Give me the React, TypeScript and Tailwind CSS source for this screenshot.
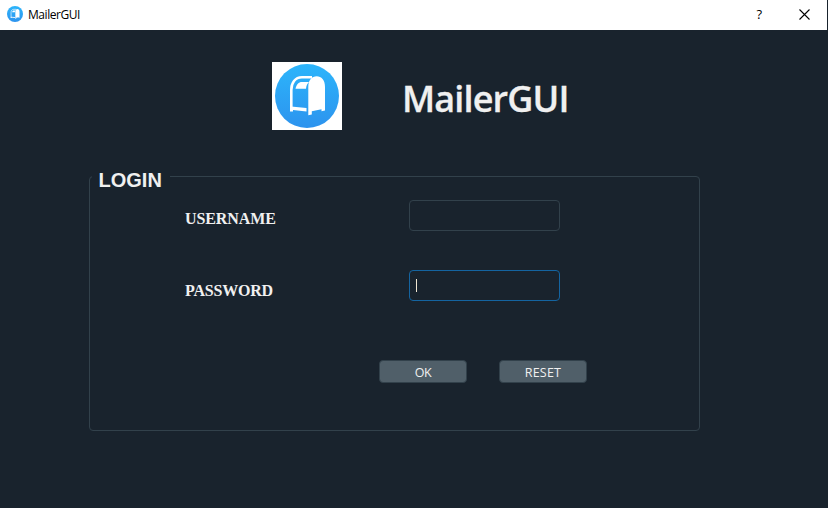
function MailboxIcon({ className }: { className: string }) {
  return (
    <svg viewBox="0 0 64 64" className={className} aria-hidden="true">
      <defs>
        <linearGradient id="sky" x1="0" y1="0" x2="0" y2="1">
          <stop offset="0" stopColor="#2cb5fb" />
          <stop offset="1" stopColor="#2d93ee" />
        </linearGradient>
      </defs>
      <circle cx="32" cy="32" r="32" fill="url(#sky)" />
      <path d="M37 13.3H27C20 13.3 16.3 19 16.3 26V47" fill="none" stroke="#fff" strokeWidth="2.6" />
      <path d="M16 42.5L31.5 44V47.5L18 46V47.5H15V42.5Z" fill="#fff" />
      <path d="M34 18C32 20 31.3 22 31 24.7H20.5C21.5 20.5 23.5 18 27 18Z" fill="#fff" />
      <path d="M33.3 51.3V23C33.3 16 37 12.3 41.7 12.3S50 16 50 23V46.5L46.5 47.3V45.2L36.8 47.3V50.5Z" fill="#fff" />
    </svg>
  );
}

export default function App() {
  return (
    <div className="flex h-[508px] w-[828px] flex-col overflow-hidden bg-[#19232d] font-['Open_Sans','Noto_Sans',sans-serif] text-[#f0f0f0]">
      <header className="flex h-[30px] shrink-0 items-center border-r border-[#19232d] bg-white pl-[7px] text-black">
        <MailboxIcon className="mb-[2px] size-[16px]" />
        <span className="ml-[5px] text-[12px] leading-[30px] tracking-[-0.45px]">MailerGUI</span>
        <span className="ml-auto mr-[37px] pb-[2px] text-[13px] font-medium leading-[28px]">?</span>
        <svg className="mb-[2px] mr-[17px] size-[11px]" viewBox="0 0 11 11" stroke="#000" strokeWidth="1.1">
          <path d="M0.5 0.5L10.5 10.5M10.5 0.5L0.5 10.5" />
        </svg>
      </header>
      <main className="flex grow flex-col">
        <div className="flex h-[100px] shrink-0 pl-[272px] pt-[32px]">
          <div className="flex h-[68px] w-[70px] items-center justify-center bg-white">
            <MailboxIcon className="size-[64px]" />
          </div>
          <h1 className="ml-[60px] mt-[12px] whitespace-nowrap text-[36px] font-semibold leading-[50px] tracking-[-0.85px] [-webkit-text-stroke:0.3px_#f0f0f0]">MailerGUI</h1>
        </div>
        <section className="ml-[89px] mt-[46px] flex h-[255px] w-[611px] flex-col rounded-[4px] border border-[#32414b]">
          <h2 className="-mt-[9px] ml-[2px] h-[24px] w-[78px] bg-[#19232d] pl-[6.5px] font-['Liberation_Sans',Arial,sans-serif] text-[20px] font-bold leading-[24px]">
            LOGIN
          </h2>
          <div className="mt-[8px] flex pl-[95px]">
            <label htmlFor="username" className="w-[224px] pt-[9px] font-['Liberation_Serif',serif] text-[16px] font-bold leading-[20px] tracking-[-0.1px]">USERNAME</label>
            <input id="username" className="h-[31px] w-[151px] rounded-[4px] border border-[#32414b] bg-transparent px-[6px] outline-none" />
          </div>
          <div className="mt-[39px] flex pl-[95px]">
            <label className="w-[224px] pt-[11px] font-['Liberation_Serif',serif] text-[16px] font-bold leading-[20px] tracking-[-0.2px]">PASSWORD</label>
            <div className="flex h-[31px] w-[151px] items-center rounded-[4px] border border-[#1464a0] pl-[6px]">
              <span className="h-[13px] w-px bg-[#f0e6d2]" />
            </div>
          </div>
          <div className="mt-[59px] flex gap-[32px] pl-[289px] text-[12.5px] leading-[19px]">
            <button className="h-[23px] w-[88px] rounded-[4px] border border-[#32414b] bg-[#505f69] pt-[2px] tracking-[-0.4px]">OK</button>
            <button className="h-[23px] w-[88px] rounded-[4px] border border-[#32414b] bg-[#505f69] pt-[2px] tracking-[0.2px]">RESET</button>
          </div>
        </section>
      </main>
    </div>
  );
}
